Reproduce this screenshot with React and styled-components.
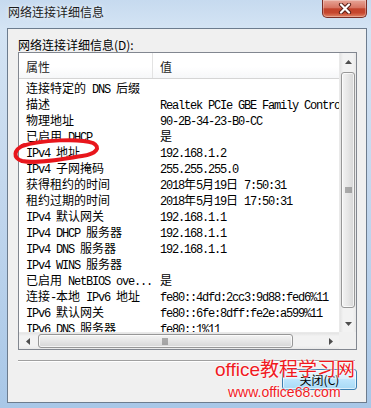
import React from 'react';
import styled, { createGlobalStyle } from 'styled-components';

const GlobalStyle = createGlobalStyle`
  html, body { margin: 0; padding: 0; }
  body { width: 371px; height: 408px; overflow: hidden; background: #c2d7ee; }
`;

const UI = '"Noto Sans CJK SC", "Noto Sans", sans-serif';

const Window = styled.div`
  position: relative;
  width: 371px;
  height: 408px;
  display: flex;
  flex-direction: column;
  background: linear-gradient(180deg, #c6daef 0%, #d4e4f4 7%, #c4d8ee 45%, #a8c7e7 100%);
  font-family: ${UI};
  overflow: hidden;
`;

const TitleBar = styled.div`
  height: 28px;
  flex-shrink: 0;
  display: flex;
  align-items: flex-start;
`;

const Title = styled.div`
  padding: 4px 0 0 8px;
  font-size: 12px;
  line-height: 16px;
  color: #1b1b1b;
  text-shadow: 0 0 5px rgba(255, 255, 255, 0.95);
`;

const CloseBtn = styled.div`
  margin-left: auto;
  margin-right: 4px;
  width: 45px;
  height: 18px;
  box-sizing: border-box;
  border: 1px solid #7a2e26;
  border-top: none;
  border-radius: 0 0 5px 5px;
  background: linear-gradient(180deg, #e7a597 0%, #d77462 45%, #c2432c 52%, #c6462e 75%, #e08466 100%);
  box-shadow: inset 0 0 0 1px rgba(255, 255, 255, 0.3);
  display: flex;
  align-items: center;
  justify-content: center;
`;

const Client = styled.div`
  flex: 1;
  margin: 0 4px 5px 7px;
  border: 1px solid #6c7c8e;
  background: #f0f0f0;
  display: flex;
  flex-direction: column;
  padding: 9px 9px 12px 10px;
`;

const GroupLabel = styled.div`
  font-size: 12px;
  line-height: 14px;
  color: #000;
`;

const ListView = styled.div`
  height: 298px;
  box-sizing: border-box;
  border: 1px solid #828790;
  background: #fff;
  display: grid;
  grid-template-columns: 1fr 17px;
  grid-template-rows: 1fr 17px;
`;

const Viewport = styled.div`
  min-width: 0;
  min-height: 0;
  overflow: hidden;
`;

const Header = styled.div`
  display: grid;
  grid-template-columns: 134px 1fr;
  height: 26px;
  box-sizing: border-box;
  background: linear-gradient(180deg, #ffffff 0%, #ffffff 55%, #f6f7f9 100%);
  border-bottom: 1px solid #d5d5d5;
`;

const HeaderCell = styled.div`
  padding: 6px 0 0 7px;
  font-size: 12px;
  line-height: 16px;
  color: #1e1e1e;
  border-right: ${({ last }) => (last ? 'none' : '1px solid #e3e3e3')};
`;

const Rows = styled.div`
  padding-top: 1px;
`;

const Row = styled.div`
  display: grid;
  grid-template-columns: 134px 1fr;
  height: 16px;
`;

const Cell = styled.div`
  padding-left: 7px;
  font-size: 12px;
  line-height: 16px;
  color: #000;
  white-space: nowrap;
  overflow: hidden;
`;

const Latin = styled.span`
  font-family: "Liberation Mono", monospace;
  font-size: 12px;
  letter-spacing: -1.2px;
`;

const VScroll = styled.div`
  display: flex;
  flex-direction: column;
  background: linear-gradient(90deg, #e4e4e4 0%, #f2f2f2 20%, #f2f2f2 80%, #e8e8e8 100%);
  border-left: 1px solid #e9e9e9;
`;

const HScroll = styled.div`
  display: flex;
  background: linear-gradient(180deg, #e4e4e4 0%, #f2f2f2 20%, #f2f2f2 80%, #e8e8e8 100%);
  border-top: 1px solid #e9e9e9;
`;

const Corner = styled.div`
  background: #f0f0f0;
`;

const Arrow = styled.div`
  flex: 0 0 17px;
  height: ${({ horizontal }) => (horizontal ? 'auto' : '17px')};
  display: flex;
  align-items: center;
  justify-content: center;
`;

const Thumb = styled.div`
  box-sizing: border-box;
  border: 1px solid #979797;
  border-radius: 3px;
  display: flex;
  align-items: center;
  justify-content: center;
  box-shadow: inset 0 0 0 1px rgba(255, 255, 255, 0.7);
  background: ${({ horizontal }) =>
    horizontal
      ? 'linear-gradient(180deg, #f3f3f3 0%, #e6e6e6 50%, #d6d6d6 100%)'
      : 'linear-gradient(90deg, #f3f3f3 0%, #e6e6e6 50%, #d6d6d6 100%)'};
`;

const VThumb = styled(Thumb)`
  flex: 1;
  margin: 2px 1px 7px 1px;
`;

const HThumb = styled(Thumb)`
  width: 255px;
  margin: 1px 0 1px 2px;
`;

const Separator = styled.div`
  margin-top: 10px;
  border-top: 1px solid #a0a0a0;
  border-bottom: 1px solid #ffffff;
  margin-right: 2px;
`;

const Button = styled.div`
  align-self: flex-end;
  margin-top: 7px;
  width: 75px;
  height: 21px;
  box-sizing: border-box;
  border: 1px solid #3c7fb1;
  border-radius: 3px;
  background: linear-gradient(180deg, #eaf6fd 0%, #d9f0fc 45%, #bee6fd 50%, #a7d9f5 100%);
  box-shadow: inset 0 0 0 1px rgba(255, 255, 255, 0.6);
  font-size: 12px;
  line-height: 19px;
  text-align: center;
  color: #000;
`;

const Scribble = styled.svg`
  position: absolute;
  left: 10px;
  top: 132px;
  pointer-events: none;
`;

const Watermark = styled.div`
  position: absolute;
  left: ${({ x }) => x}px;
  top: ${({ y }) => y}px;
  color: #f01a1f;
  font-family: ${({ latin }) => (latin ? '"Liberation Sans", sans-serif' : '"Liberation Sans", "Noto Sans CJK SC", sans-serif')};
  font-size: ${({ size }) => size}px;
  line-height: ${({ size }) => size + 2}px;
  white-space: nowrap;
  text-shadow: 0 0 2px #fff, 0 0 2px #fff;
  pointer-events: none;
`;

const rows = [
  ['连接特定的 DNS 后缀', ''],
  ['描述', 'Realtek PCIe GBE Family Controller'],
  ['物理地址', '90-2B-34-23-B0-CC'],
  ['已启用 DHCP', '是'],
  ['IPv4 地址', '192.168.1.2'],
  ['IPv4 子网掩码', '255.255.255.0'],
  ['获得租约的时间', '2018年5月19日 7:50:31'],
  ['租约过期的时间', '2018年5月19日 17:50:31'],
  ['IPv4 默认网关', '192.168.1.1'],
  ['IPv4 DHCP 服务器', '192.168.1.1'],
  ['IPv4 DNS 服务器', '192.168.1.1'],
  ['IPv4 WINS 服务器', ''],
  ['已启用 NetBIOS ove...', '是'],
  ['连接-本地 IPv6 地址', 'fe80::4dfd:2cc3:9d88:fed6%11'],
  ['IPv6 默认网关', 'fe80::6fe:8dff:fe2e:a599%11'],
  ['IPv6 DNS 服务器', 'fe80::1%11'],
];

// SimSun-like: ascii runs in a narrow mono, CJK in the UI font
const Mixed = ({ text }) =>
  text
    .split(/([\x20-\x7e]+)/)
    .filter(Boolean)
    .map((part, i) =>
      /^[\x20-\x7e]+$/.test(part) ? <Latin key={i}>{part}</Latin> : <span key={i}>{part}</span>
    );

const Tri = ({ dir }) => {
  const pts = {
    up: '0,4 3.5,0 7,4',
    down: '0,0 7,0 3.5,4',
    left: '4,0 4,7 0,3.5',
    right: '0,0 0,7 4,3.5',
  }[dir];
  const w = dir === 'up' || dir === 'down' ? 7 : 4;
  const h = dir === 'up' || dir === 'down' ? 4 : 7;
  return (
    <svg width={w} height={h} viewBox={`0 0 ${w} ${h}`}>
      <polygon points={pts} fill="#4d4d4d" />
    </svg>
  );
};

const Grip = ({ horizontal }) => (
  <svg width={horizontal ? 7 : 7} height={horizontal ? 7 : 7} viewBox="0 0 7 7">
    {[0, 2, 4].map((o) =>
      horizontal ? (
        <rect key={o} x={o + 0.5} y="0" width="1" height="7" fill="#6a6a6a" />
      ) : (
        <rect key={o} x="0" y={o + 0.5} width="7" height="1" fill="#6a6a6a" />
      )
    )}
  </svg>
);

export default function App() {
  return (
    <>
      <GlobalStyle />
      <Window>
        <TitleBar>
          <Title>网络连接详细信息</Title>
          <CloseBtn>
            <svg width="14" height="11" viewBox="0 0 14 11">
              <path d="M3 1.5 L11 9.5 M11 1.5 L3 9.5" stroke="#5a2119" strokeWidth="4.2" strokeLinecap="round" />
              <path d="M3 1.5 L11 9.5 M11 1.5 L3 9.5" stroke="#ffffff" strokeWidth="2.2" strokeLinecap="round" />
            </svg>
          </CloseBtn>
        </TitleBar>
        <Client>
          <GroupLabel>网络连接详细信息(D):</GroupLabel>
          <ListView>
            <Viewport>
              <Header>
                <HeaderCell>属性</HeaderCell>
                <HeaderCell last>值</HeaderCell>
              </Header>
              <Rows>
                {rows.map(([k, v], i) => (
                  <Row key={i}>
                    <Cell><Mixed text={k} /></Cell>
                    <Cell><Mixed text={v} /></Cell>
                  </Row>
                ))}
              </Rows>
            </Viewport>
            <VScroll>
              <Arrow><Tri dir="up" /></Arrow>
              <VThumb><Grip /></VThumb>
              <Arrow><Tri dir="down" /></Arrow>
            </VScroll>
            <HScroll>
              <Arrow horizontal><Tri dir="left" /></Arrow>
              <HThumb horizontal><Grip horizontal /></HThumb>
              <Arrow horizontal style={{ marginLeft: 'auto' }}><Tri dir="right" /></Arrow>
            </HScroll>
            <Corner />
          </ListView>
          <Separator />
          <Button>关闭(C)</Button>
        </Client>

        <Scribble width="94" height="36" viewBox="10 132 94 36">
          <path
            d="M22 146 C40 140, 80 138, 93 143 C101 147, 97 154, 82 156 C62 159, 36 164, 22 161 C13 158, 13 150, 24 145"
            fill="none"
            stroke="#e8161c"
            strokeWidth="4"
            strokeLinecap="round"
          />
        </Scribble>
        <Watermark x={215} y={359} size={19}>office教程学习网</Watermark>
        <Watermark x={228} y={384} size={14} latin>www.office68.com</Watermark>
      </Window>
    </>
  );
}
